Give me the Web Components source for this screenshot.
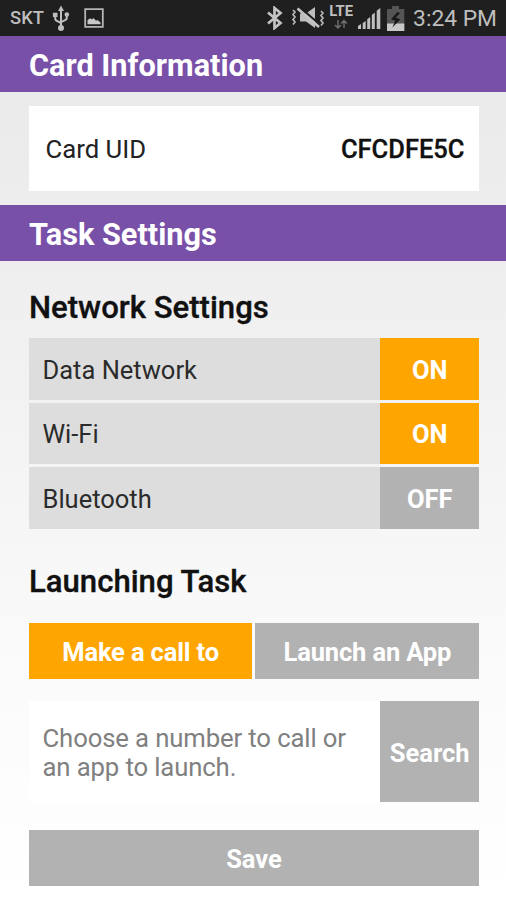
<!DOCTYPE html>
<html lang="en">
<head>
<meta charset="utf-8">
<title>Card Information</title>
<style>
html,body{margin:0;height:900px;overflow:hidden;font-family:Roboto,"Noto Sans",sans-serif}
</style>
</head>
<body>
<task-screen></task-screen>
<script>
const define = (name, html) => customElements.define(name, class extends HTMLElement {
  constructor() {
    super();
    const t = document.createElement('template');
    t.innerHTML = html;
    this.attachShadow({ mode: 'open' }).append(t.content.cloneNode(true));
  }
});

define('status-bar', `<style>
:host{display:flex;height:36px;box-sizing:border-box;background:#1f1f1f;color:#bebebe;align-items:center;padding:0 9px 0 10px;justify-content:space-between}
div{display:flex;align-items:center}
svg{display:block;flex:none}
.carrier{font-size:18.4px;font-weight:500;line-height:36px;width:42px}
.time{font-size:22.8px;line-height:36px;white-space:nowrap;margin-left:7px;padding-top:1px}
.net{display:flex;flex-direction:column;align-items:center;width:24px;height:31px;margin-left:4px;font-size:14.8px;line-height:15px;font-weight:700;box-sizing:border-box;padding-top:1px}
</style>
<div><span class="carrier">SKT</span>
<svg width="18" height="28" viewBox="0 0 18 28" fill="none" stroke="#bebebe" stroke-width="2"><path d="M9 5V24M3.2 11v3.2q0 2.3 2.3 3l3.5 1.8M14.8 10v3.4q0 2.3-2.3 3L9 18.2"/><g fill="#bebebe" stroke="none"><path d="M9 1.5 12 7H6zM.9 8.8h4.6v4.2H.9z"/><circle cx="14.8" cy="10.5" r="2.3"/><circle cx="9" cy="24" r="3"/></g></svg>
<svg style="margin-left:14px" width="20" height="20" viewBox="0 0 20 20"><path d="M1.2 1.2h17.6v17.6H1.2z" fill="none" stroke="#b5b5b5" stroke-width="1.8"/><path d="M3.5 16.2v-4l2.5-2 2 1.3 1.5-1.5 2.5 2.8 1.5-.8 3 2.5v1.7z" fill="#c8c8c8"/></svg></div>
<div>
<svg width="18" height="24" viewBox="0 0 18 24"><path d="M2 6.5 14.5 17 8.5 22V2l6 5L2 17.5" fill="none" stroke="#c4c4c4" stroke-width="2.7"/></svg>
<svg style="margin-left:7px" width="34" height="22" viewBox="0 0 34 22"><path d="M9 6.5h6l9-6.5v21l-9-6.5H9z" fill="#bebebe"/><path d="M9 .5 30 18.5" stroke="#1f1f1f" stroke-width="2.2"/><path d="M6.5 1.5 28 20" stroke="#c4c4c4" stroke-width="2.6"/><path d="M2 3l2 2-2 2.5 2 2.5-2 2.5 2 2.5-2 2.5M30 4l2 2-2 2.5 2 2.5-2 2.5 2 2.5-2 2.5" fill="none" stroke="#b8b8b8" stroke-width="1.7"/></svg>
<span class="net">LTE<svg width="14" height="11" viewBox="0 0 14 11" fill="none" stroke="#6e6e6e" stroke-width="1.5"><path d="M4 1v7M1 6l3 3 3-3M10 9V2M7 4.5l3-3 3 3"/></svg></span>
<svg style="margin-left:5px" width="24" height="25" viewBox="0 0 24 25" fill="#c0c0c0"><path d="M0 20l3-2v5H0zM4.7 17l3-2v8h-3zM9.2 13.2l3-2.2v12h-3zM13.8 9l3-2.4V23h-3zM18.7 4.7l3.6-2.7v21h-3.6z"/></svg>
<svg style="margin-left:4px" width="20" height="27" viewBox="0 0 20 27"><path d="M6 1h7v3h5.3v22H1V4h5z" fill="#555"/><path d="M1 18.5h17.3V26H1z" fill="#c8c8c8"/><path d="M11.5 7 5 14.2l4.2 1.5-2.8 6.8 8-8.3-4.8-1.5L14 8z" fill="#181818"/></svg>
<span class="time">3:24 PM</span></div>`);

define('section-bar', `<style>
:host{display:flex;align-items:center;height:55.5px;box-sizing:border-box;padding:4.5px 28.5px 0 29px;background:#7950a7;color:#fff;font-size:30.7px;font-weight:700;line-height:36px;white-space:nowrap}
</style><slot></slot>`);

define('group-title', `<style>
:host{display:block;font-size:31.1px;font-weight:500;line-height:36px;color:#111;white-space:nowrap;padding:1px 0 0 .5px;-webkit-text-stroke:.35px #111}
</style><slot></slot>`);

define('card-field', `<style>
:host{display:flex;align-items:center;justify-content:space-between;height:84.5px;box-sizing:border-box;background:#fff;padding:1px 14px 0 17px;font-size:25.7px;color:#222}
b{font-weight:500;font-size:25.5px;color:#111;-webkit-text-stroke:.3px #111}
</style><span><slot></slot></span><b><slot name="value"></slot></b>`);

define('flat-button', `<style>
:host{display:flex;align-items:center;justify-content:center;box-sizing:border-box;padding:2px 0 0 1px;background:#b2b2b2;color:#fff;font-size:25.5px;font-weight:700;white-space:nowrap}
:host([active]){background:#ffa500}
</style><slot></slot>`);

define('setting-row', `<style>
:host{display:flex;height:61.5px;background:#ddd;color:#2b2b2b;font-size:25.5px}
.label{flex:1;display:flex;align-items:center;padding:2px 0 0 14px}
::slotted(flat-button){width:98.5px}
</style><span class="label"><slot></slot></span><slot name="toggle"></slot>`);

define('search-field', `<style>
:host{display:flex;height:101px}
.hint{flex:1;background:#fff;color:#808080;font-size:25.7px;line-height:29.5px;padding:22.5px 0 0 14px;white-space:nowrap;letter-spacing:-.12px}
::slotted(flat-button){width:98.5px}
</style><div class="hint"><slot></slot></div><slot name="action"></slot>`);

define('task-screen', `<style>
:host{display:flex;flex-direction:column;height:900px;background:linear-gradient(#e8e8e8,#f1f1f1 40%,#fafafa 72%,#fff)}
status-bar,section-bar{flex:none}
.card{padding:14.5px 27.5px 14.5px 28.5px}
.body{padding:28.5px 27.5px 0 28.5px;display:flex;flex-direction:column}
.rows{display:grid;gap:3.2px;margin-top:12px}
.second{margin-top:34.5px}
.tabs{display:grid;grid-template-columns:1fr 1fr;gap:3.5px;height:55.5px;margin:22.7px 0 22.5px}
.tabs flat-button{letter-spacing:-.15px}
.save{height:56px;margin-top:27.8px}
</style>
<status-bar></status-bar>
<section-bar>Card Information</section-bar>
<div class="card"><card-field>Card UID<span slot="value">CFCDFE5C</span></card-field></div>
<section-bar>Task Settings</section-bar>
<div class="body">
<group-title>Network Settings</group-title>
<div class="rows">
<setting-row>Data Network<flat-button slot="toggle" active>ON</flat-button></setting-row>
<setting-row>Wi-Fi<flat-button slot="toggle" active>ON</flat-button></setting-row>
<setting-row>Bluetooth<flat-button slot="toggle">OFF</flat-button></setting-row>
</div>
<group-title class="second">Launching Task</group-title>
<div class="tabs"><flat-button active>Make a call to</flat-button><flat-button>Launch an App</flat-button></div>
<search-field>Choose a number to call or<br>an app to launch.<flat-button slot="action">Search</flat-button></search-field>
<flat-button class="save">Save</flat-button>
</div>`);
</script>
</body>
</html>
